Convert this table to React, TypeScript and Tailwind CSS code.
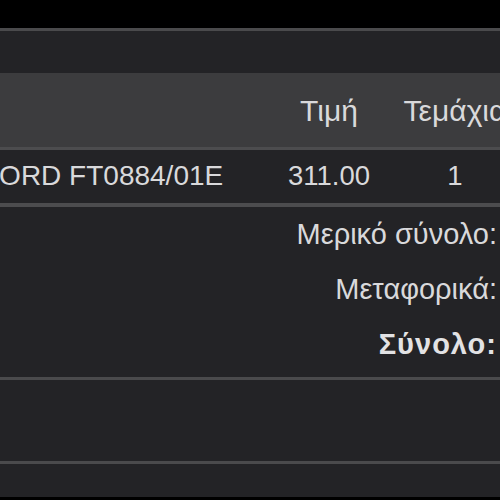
const rows = [{ product: "FORD FT0884/01E", price: "311.00", qty: "1" }];

const totals = [
  { label: "Μερικό σύνολο:", bold: false },
  { label: "Μεταφορικά:", bold: false },
  { label: "Σύνολο:", bold: true },
];

export default function App() {
  return (
    <div
      className="flex h-[500px] w-[500px] flex-col overflow-hidden bg-black text-[#d9d9db]"
      style={{ fontFamily: '"Liberation Sans", Arial, sans-serif' }}
    >
      <div className="h-[28px] shrink-0 bg-black" />
      <div className="flex h-[469px] shrink-0 flex-col border-t-[3px] border-[#4a4a4c] bg-[#232326]">
        <div className="h-[42px] shrink-0" />

        {/* table header */}
        <div className="flex h-[74px] shrink-0 items-center bg-[#3c3c3e] text-[30px]">
          <div className="w-[270px] shrink-0" />
          <div className="w-[118px] shrink-0 text-center">Τιμή</div>
          <div className="w-[134px] shrink-0 whitespace-nowrap text-center">Τεμάχια</div>
        </div>

        {rows.map((r) => (
          <div
            key={r.product}
            className="flex h-[60px] shrink-0 items-center border-t-[3px] border-b-[4px] border-[#4c4c4e] pb-[2px] text-[27.5px]"
          >
            <div className="w-[270px] shrink-0 overflow-hidden">
              <div className="-ml-[18px] whitespace-nowrap text-[28px]">{r.product}</div>
            </div>
            <div className="w-[118px] shrink-0 text-center">{r.price}</div>
            <div className="w-[134px] shrink-0 text-center">{r.qty}</div>
          </div>
        ))}

        {/* totals */}
        <div className="flex h-[170px] shrink-0 flex-col items-end justify-center gap-[24px] pr-[3px] pb-[5px] text-[29px] leading-[31px]">
          {totals.map((t) => (
            <div
              key={t.label}
              className={t.bold ? "font-bold tracking-[1px] text-[#e2e2e4]" : ""}
            >
              {t.label}
            </div>
          ))}
        </div>

        <div className="h-[84px] shrink-0 border-t-[3px] border-[#4a4a4c]" />
        <div className="flex-1 border-t-[3px] border-[#4a4a4c]" />
      </div>
      <div className="flex-1 bg-black" />
    </div>
  );
}
